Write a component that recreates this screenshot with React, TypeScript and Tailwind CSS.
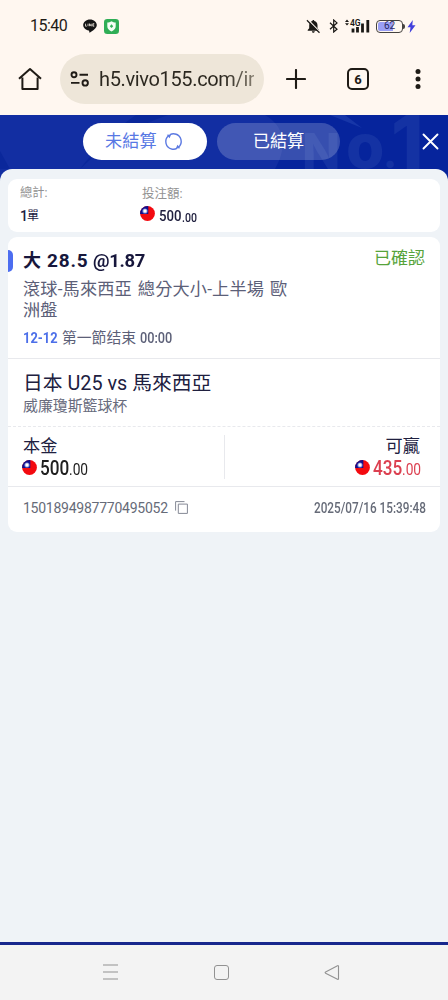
import React from 'react';

function Flag({ className = '' }: { className?: string }) {
  return (
    <svg className={`block shrink-0 ${className}`} width="15" height="15" viewBox="0 0 15 15">
      <defs>
        <clipPath id="disc">
          <circle cx="7.5" cy="7.5" r="7.4" />
        </clipPath>
      </defs>
      <g clipPath="url(#disc)">
        <rect width="15" height="15" fill="#f30a10" />
        <rect width="8.3" height="8" fill="#10108c" />
        <circle cx="5" cy="5" r="2.6" fill="#7d86d8" />
        <circle cx="5" cy="5" r="1.7" fill="#fff" />
      </g>
    </svg>
  );
}

function StatusBar() {
  return (
    <div className="flex h-[52px] items-center pl-[30px] text-[#1f1b16]">
      <span className="w-[53px] text-[16px] leading-none tracking-[-0.5px]">15:40</span>
      <svg width="14" height="14" viewBox="0 0 14 14">
        <path d="M7 .4C3.200.4.2 2.900.2 6c0 2.700 2.300 5 5.500 5.500.5.200.7.500.5 1.500 0 .6.200.7.800.4 2.800-1.500 6.800-4.200 6.800-7.400C13.800 2.900 10.800.4 7 .4z" fill="#151515" />
        <path d="M2.500 4.700v2.500h1.300M5 4.700v2.500M6.500 7.200V4.700l1.700 2.500V4.700M11.300 4.700h-1.500v2.500h1.500M9.800 6h1.300" fill="none" stroke="#fff8ee" strokeWidth=".75" />
      </svg>
      <svg className="ml-[7px]" width="15" height="15" viewBox="0 0 15 15">
        <rect width="15" height="15" rx="3.300" fill="#2fae56" />
        <path d="M7.500 2.300c1.300.9 2.700 1.200 4.200 1.300v3.700c0 2.500-1.700 4-4.200 5.200-2.500-1.200-4.200-2.700-4.200-5.200V3.600c1.500-.1 2.900-.4 4.200-1.300z" fill="#f4fff5" />
        <path d="M7.500 5.300l1.700 1.900-1.700 1.900-1.700-1.900z" fill="#35b35c" />
      </svg>
      <svg className="ml-[187px]" width="15" height="15" viewBox="0 0 15 15">
        <path d="M7.300 1c.7 0 1 .5 1 1.100 2 .5 3.200 2 3.200 4.100v3.100l1.500 1.700v.7H1.700V11l1.500-1.700V6.200c0-2.100 1.200-3.600 3.200-4.100 0-.6.300-1.100.9-1.100zM5.900 12.300h2.900c0 .9-.6 1.500-1.500 1.500s-1.400-.6-1.400-1.500z" fill="#1a1815" />
        <path d="M2 .8l12.300 12.600" stroke="#fff7f0" strokeWidth="1.500" />
        <path d="M.9 1.300l12.600 12.500" stroke="#1a1815" strokeWidth="1.200" />
      </svg>
      <svg className="ml-[8px]" width="10" height="14" viewBox="0 0 10 14">
        <path d="M1 3.700l7 6.500L4.700 13V1L8 3.900 1 10.300" fill="none" stroke="#1a1815" strokeWidth="1.200" />
      </svg>
      <svg className="ml-[6px]" width="26" height="15" viewBox="0 0 26 15">
        <path d="M0 3l2-2.500L4 3zM0 4.300h4L2 6.500z" fill="#1a1815" />
        <path d="M8 9.500v4M12.500 8v5.500M17.500 4.500v9M22.800 1v12.500" stroke="#1a1815" strokeWidth="2.800" />
        <text x="5" y="6.900" fontSize="8.500" fontWeight="600" fill="#1a1815" stroke="#fff7f0" strokeWidth="1" paintOrder="stroke">4G</text>
      </svg>
      <div className="relative ml-[5px] flex h-[13px] w-[27px] items-center justify-center rounded-[4px] border border-[#44423f] text-[10px] leading-none text-[#292b65]">
        <div className="absolute inset-y-[1px] left-[1px] w-[15px] rounded-l-[2px] bg-[#9a9ff5]" />
        <span className="relative">62</span>
      </div>
      <div className="h-[5px] w-[2px] rounded-r bg-[#44423f]" />
      <svg className="ml-[2px]" width="9" height="13" viewBox="0 0 9 13">
        <path d="M5.800 0L.5 7.300h3L2.700 13 8.500 5.300H5.300z" fill="#4140dc" />
      </svg>
    </div>
  );
}

function BrowserBar() {
  return (
    <div className="flex h-[63px] items-start text-[#1f1b16]">
      <svg className="ml-[18px] mt-[15px]" width="24" height="24" viewBox="0 0 24 24">
        <path d="M1 11.700L12 2l11 9.700M4.400 10.500V22h15.200V10.500" fill="none" stroke="#1f1b16" strokeWidth="2" strokeLinejoin="round" />
      </svg>
      <div className="ml-[18px] mt-[2px] flex h-[50px] w-[204px] items-center rounded-full bg-[#eee6d9] pl-[10px]">
        <svg width="20" height="18" viewBox="0 0 20 18">
          <g fill="none" stroke="#1f1b16" strokeWidth="1.900">
            <circle cx="4" cy="4.700" r="2.500" />
            <path d="M9.500 4.700h8.500M1 12.900h8.500" />
            <circle cx="15.200" cy="12.900" r="2.700" />
          </g>
        </svg>
        <span className="ml-[9px] whitespace-nowrap bg-gradient-to-r from-[#2b271f] from-80% to-[#857e70] bg-clip-text text-[20px] leading-[28px] tracking-[-0.35px] text-transparent">
          h5.vivo155.com/ir
        </span>
      </div>
      <svg className="ml-[22px] mt-[17px]" width="20" height="20" viewBox="0 0 20 20">
        <path d="M10 1v18M1 10h18" stroke="#1f1b16" strokeWidth="2.100" strokeLinecap="round" />
      </svg>
      <div className="ml-[41px] mt-[16px] flex h-[22px] w-[22px] items-center justify-center rounded-[5px] border-2 border-[#1f1b16] text-[13px] font-bold leading-none">6</div>
      <svg className="ml-[45px] mt-[16px]" width="8" height="22" viewBox="0 0 8 22">
        <g fill="#1f1b16">
          <circle cx="4" cy="3.500" r="2.500" />
          <circle cx="4" cy="11" r="2.500" />
          <circle cx="4" cy="18.500" r="2.500" />
        </g>
      </svg>
    </div>
  );
}

function TabHeader() {
  return (
    <div className="relative flex h-[66px] items-start bg-[#06249c] pl-[83px] pt-[8px]">
      <svg className="absolute left-0 top-0" width="448" height="66" viewBox="0 0 448 66">
        <rect width="285" height="66" fill="#122ea2" />
        <path d="M0 36l10 18H0zM80 54c25-24 55-43 88-54h-32C112 16 92 38 80 54z" fill="#0a279b" />
        <path d="M265 0c18 10 24 30 10 54h26V0z" fill="#06249c" />
        <path d="M330 0l32 13L345 0z" fill="#1736a8" />
        <g fill="#1432a3" fontWeight="800" fontFamily="Inter, sans-serif">
          <text x="302" y="54" fontSize="50">N</text>
          <text x="346" y="53" fontSize="62">o</text>
          <text x="383" y="53" fontSize="40">.</text>
          <text x="391" y="54" fontSize="74">1</text>
        </g>
      </svg>
      <div className="relative flex h-[37px] w-[124px] items-center rounded-full bg-white pl-[22px] text-[17.2px] text-[#5878e4]">
        <span className="leading-none">未結算</span>
        <svg className="ml-[7px]" width="19" height="19" viewBox="0 0 19 19">
          <g fill="none" stroke="#5b79e2" strokeWidth="1.400">
            <path d="M7.600 17A7.700 7.700 0 0 1 4.500 3.700M6 2.600A7.700 7.700 0 0 1 12.300 2.300M11.400 2A7.700 7.700 0 0 1 14.500 15.300M13 16.400A7.700 7.700 0 0 1 7.600 17" />
          </g>
          <path d="M2.800 2.700l4.400-.2-1.700 3.800zM16.200 16.300l-4.400.2 1.700-3.800z" fill="#5b79e2" />
        </svg>
      </div>
      <div className="relative ml-[10px] flex h-[37px] w-[123px] items-center justify-center rounded-full bg-white/20 text-[17.2px] leading-none text-white">已結算</div>
      <svg className="relative ml-[82px] mt-[10px]" width="17" height="17" viewBox="0 0 17 17">
        <path d="M1.500 1.500l14 14M15.500 1.500l-14 14" stroke="#fff" strokeWidth="1.900" strokeLinecap="round" />
      </svg>
    </div>
  );
}

function Summary() {
  return (
    <div className="flex h-[53px] rounded-[9px] bg-white pl-[12px] pt-[6px]">
      <div className="w-[122px]">
        <div className="h-[17px] text-[12.3px] leading-[17px] text-[#929292]">總計:</div>
        <div className="mt-[6px] flex h-[17px] items-center leading-[17px] text-[#20203f]">
          <span className="w-[7px] text-[14px] font-medium">1</span><span className="text-[12px]">單</span>
        </div>
      </div>
      <div>
        <div className="h-[17px] text-[12.500px] leading-[17px] text-[#929292]">投注額:</div>
        <div className="-ml-[2px] mt-[4px] flex h-[19px] items-center text-[#20203f]">
          <Flag className="-mt-[4px]" />
          <span className="ml-[4px] mt-[2px] w-[23px] origin-left scale-x-[.88] text-[15px] font-medium leading-none">500</span>
          <span className="mt-[4px] origin-left scale-x-[.88] text-[12px] font-medium leading-none">.00</span>
        </div>
      </div>
    </div>
  );
}

function BetCard() {
  return (
    <div className="mt-[5px] h-[295px] rounded-[9px] bg-white text-[#20203f]">
      <div className="flex h-[122px] border-b border-[#e8e9ed]">
        <div className="mt-[13px] h-[22px] w-[5px] rounded-r-[5px] bg-[#4c6df0]" />
        <div className="ml-[10px] flex-1 pt-[13px]">
          <div className="flex h-[22px] items-center whitespace-nowrap text-[19px] font-bold leading-[22px] text-[#17173c]">
            <span className="w-[24px] text-[18px]">大</span>
            <span className="w-[46px] text-[19px] tracking-[0.8px]">28.5</span>
            <span className="origin-left scale-x-[.97] text-[19px] tracking-[-0.3px]">@1.87</span>
          </div>
          <div className="mt-[7px] w-[275px] text-[17.2px] leading-[21px] tracking-[0.15px] text-[#5c6078]">
            <div className="whitespace-nowrap [word-spacing:1.5px]">滾球-馬來西亞 總分大小-上半場 歐</div>
            <div>洲盤</div>
          </div>
          <div className="mt-[8px] flex h-[19px] items-center whitespace-nowrap text-[14.8px] leading-[19px] text-[#5c6078]">
            <span className="w-[39px] origin-left scale-x-[.87] font-bold text-[#4c6fe9]">12-12</span>
            <span className="w-[78px]">第一節结束</span>
            <span className="origin-left scale-x-[.86] font-medium">00:00</span>
          </div>
        </div>
        <div className="mr-[15px] mt-[10px] text-[17px] leading-[22px] text-[#56a33b]">已確認</div>
      </div>
      <div className="h-[68px] border-b border-dashed border-[#e8e9ed] pl-[15px] pt-[13px]">
        <div className="whitespace-nowrap text-[19.8px] leading-[23px]">日本 U25 vs 馬來西亞</div>
        <div className="mt-[1px] text-[14.9px] leading-[20px] text-[#686b7d]">威廉瓊斯籃球杯</div>
      </div>
      <div className="flex h-[60px] items-center border-b border-[#e8e9ed]">
        <div className="h-[44px] w-[217px] border-r border-[#e8e9ed] pl-[14px]">
          <div className="pl-[1px] pt-[1px] text-[17.2px] leading-[21px]">本金</div>
          <div className="flex h-[22px] items-center text-[#202020]">
            <Flag />
            <span className="ml-[3px] mt-[2px] w-[29px] origin-left scale-x-[.88] text-[19.5px] font-medium leading-none">500</span>
            <span className="mt-[4px] origin-left scale-x-[.86] text-[16px] leading-none">.00</span>
          </div>
        </div>
        <div className="ml-auto mr-[15px] h-[44px]">
          <div className="pr-[5px] pt-[1px] text-right text-[17.2px] leading-[21px]">可贏</div>
          <div className="flex h-[22px] w-[70px] items-center text-[#dc4050]">
            <Flag />
            <span className="ml-[3px] mt-[2px] w-[29px] origin-left scale-x-[.88] text-[19.5px] font-medium leading-none">435</span>
            <span className="mt-[4px] origin-left scale-x-[.86] text-[16px] leading-none">.00</span>
          </div>
        </div>
      </div>
      <div className="flex h-[41px] items-center px-[15px] text-[#666b78]">
        <span className="w-[152px] text-[14px] leading-none tracking-[-0.25px]">1501894987770495052</span>
        <svg width="13" height="13" viewBox="0 0 13 13">
          <path d="M9.500.6H.6v9M3.300 3.100h9.100v9.300H3.300z" fill="none" stroke="#858995" />
        </svg>
        <span className="ml-auto w-[111px] origin-left scale-x-[.84] whitespace-nowrap text-[14px] font-medium leading-none">2025/07/16 15:39:48</span>
      </div>
    </div>
  );
}

function SystemNav() {
  return (
    <div className="flex h-[58px] items-center border-t-[3px] border-[#17278d] bg-[#f3f3f3] pb-[1px] pl-[102px]">
      <svg width="17" height="16" viewBox="0 0 17 16">
        <path d="M1 1h15M1 8h15M1 15h15" stroke="#929292" strokeWidth="1.100" />
      </svg>
      <div className="ml-[95px] h-[15px] w-[15px] rounded-[3px] border border-[#929292]" />
      <svg className="ml-[95px]" width="16" height="17" viewBox="0 0 16 17">
        <path d="M14.500 2.200v12.500q0 1-1 .5L1.600 9.200q-1-.6 0-1.200l11.900-6.300q1-.4 1 .5z" fill="none" stroke="#929292" strokeWidth="1.100" />
      </svg>
    </div>
  );
}

export default function App() {
  return (
    <div className="flex h-[1000px] w-[448px] flex-col overflow-hidden bg-[#fff7f0] font-['Roboto','Noto_Sans_CJK_TC',sans-serif]">
      <StatusBar />
      <BrowserBar />
      <TabHeader />
      <main className="relative -mt-[12px] flex-1 rounded-t-[12px] bg-[#eff3f7] px-[8px] pt-[10px]">
        <Summary />
        <BetCard />
      </main>
      <SystemNav />
    </div>
  );
}
